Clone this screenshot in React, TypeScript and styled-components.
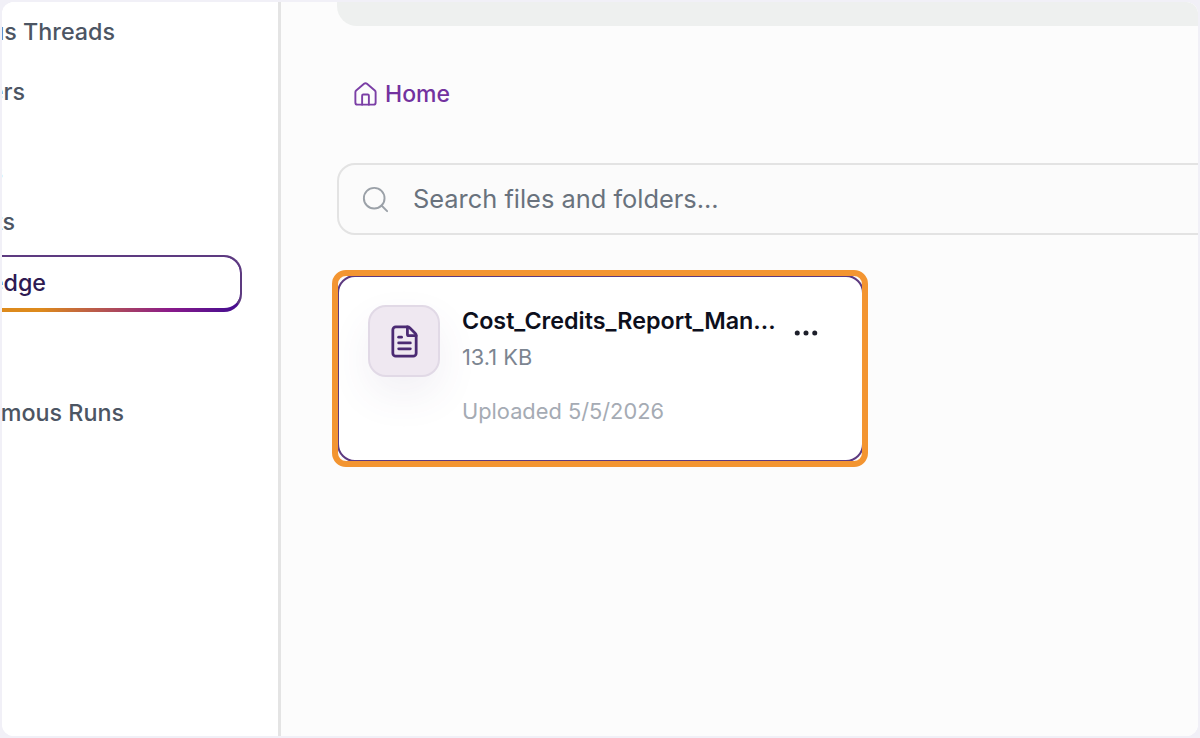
import styled, { createGlobalStyle } from "styled-components";
import { Ellipsis, FileText, House, Search } from "lucide-react";

const GlobalStyle = createGlobalStyle`
  html, body {
    margin: 0;
    height: 738px;
    background: #f1f0f7;
    overflow: hidden;
  }
  * {
    box-sizing: border-box;
  }
`;

const navItems = [
  { label: "Previous Threads", end: 115, top: 0, height: 60 },
  { label: "Members", end: 25, top: 0, height: 60 },
  { label: "Tools", end: 3, top: 20, height: 60, faint: true },
  { label: "Agents", end: 15, top: 0, height: 40 },
  { label: "Knowledge", end: 42, top: 13, height: 57, active: true },
  { label: "Autonomous Runs", end: 124, top: 71, height: 60 },
];

function App() {
  return (
    <>
      <GlobalStyle />
      <Frame>
        <Window>
          <Sidebar>
            {navItems.map((item) => (
              <NavRow
                key={item.label}
                $top={item.top}
                $height={item.height}
                $active={item.active}
              >
                <NavLabel $end={item.end} $active={item.active} $faint={item.faint}>
                  {item.label}
                </NavLabel>
              </NavRow>
            ))}
          </Sidebar>
          <Main>
            <TopBar />
            <Breadcrumb>
              <House size={27} strokeWidth={1.7} />
              <span>Home</span>
            </Breadcrumb>
            <SearchBox>
              <Search size={31} strokeWidth={1.5} />
              <SearchText>Search files and folders...</SearchText>
            </SearchBox>
            <Card>
              <IconTile>
                <FileText size={35} strokeWidth={1.9} />
              </IconTile>
              <CardBody>
                <FileName>Cost_Credits_Report_Man...</FileName>
                <FileSize>13.1 KB</FileSize>
                <FileDate>Uploaded 5/5/2026</FileDate>
              </CardBody>
              <MenuButton>
                <Ellipsis size={30} strokeWidth={2} />
              </MenuButton>
              <Highlight />
            </Card>
          </Main>
        </Window>
      </Frame>
    </>
  );
}

export default App;

const Frame = styled.div`
  height: 738px;
  padding: 2px;
`;

const Window = styled.div`
  display: flex;
  height: 100%;
  background: #fff;
  border-radius: 12px;
  overflow: hidden;
  font-family: Inter, "Liberation Sans", sans-serif;
`;

const Sidebar = styled.nav`
  flex: 0 0 279px;
  display: flex;
  flex-direction: column;
  background: #fff;
  border-right: 3px solid #e4e4e4;
  overflow: hidden;
`;

const NavRow = styled.div<{ $top: number; $height: number; $active?: boolean }>`
  display: flex;
  align-items: center;
  flex: 0 0 ${(p) => p.$height}px;
  margin-top: ${(p) => p.$top}px;
  margin-left: -2px;
  width: 242px;
  ${(p) =>
    p.$active &&
    `
    margin-left: -60px;
    width: 300px;
    padding-left: 60px;
    border-radius: 18px;
    border: 2px solid #5d3a80;
    border-bottom: 4px solid transparent;
    background:
      linear-gradient(#fff, #fff) padding-box,
      linear-gradient(90deg, #dd8a1c 33%, #8a1a8a 76%, #4a0e8f 96%) border-box;
    `}
`;

const NavLabel = styled.span<{ $end: number; $active?: boolean; $faint?: boolean }>`
  display: flex;
  justify-content: flex-end;
  flex: 0 0 ${(p) => p.$end}px;
  min-width: 0;
  padding-bottom: ${(p) => (p.$active ? 0 : 2)}px;
  white-space: nowrap;
  font-size: 23.3px;
  font-weight: 500;
  color: ${(p) => (p.$active ? "#2e1a52" : p.$faint ? "#7d9cc0" : "#4c5563")};
`;

const Main = styled.main`
  flex: 1;
  min-width: 0;
  padding-left: 56px;
  background: #fcfcfc;
  overflow: hidden;
`;

const TopBar = styled.div`
  height: 24px;
  margin-right: -20px;
  background: #eef0ef;
  border-bottom-left-radius: 20px;
`;

const Breadcrumb = styled.div`
  display: flex;
  align-items: center;
  gap: 6px;
  margin-top: 52px;
  padding-left: 15px;
  height: 32px;
  font-size: 23px;
  font-weight: 500;
  color: #73329f;

  svg {
    color: #7b3fa6;
  }
`;

const SearchBox = styled.div`
  display: flex;
  align-items: center;
  gap: 22px;
  height: 72px;
  margin-top: 53px;
  margin-right: -40px;
  padding-left: 21px;
  background: #fbfbfb;
  border: 2px solid #e3e3e3;
  border-radius: 18px;

  svg {
    color: #9ba1a8;
  }
`;

const SearchText = styled.span`
  padding-bottom: 2px;
  font-size: 25.4px;
  color: #69727d;
`;

const Card = styled.section`
  position: relative;
  display: flex;
  align-items: flex-start;
  width: 527px;
  height: 187px;
  margin-top: 40px;
  padding: 28px 0 0 29px;
  background: #fff;
  border: 2px solid #5d3a80;
  border-radius: 18px;
`;

const IconTile = styled.div`
  flex: 0 0 72px;
  height: 72px;
  display: flex;
  align-items: center;
  justify-content: center;
  background: #efe8f1;
  border: 2px solid #e1d9e6;
  border-radius: 18px;
  box-shadow: 0 18px 40px rgba(90, 60, 130, 0.08);

  svg {
    color: #4b2a73;
  }
`;

const CardBody = styled.div`
  flex: 0 0 auto;
  display: flex;
  flex-direction: column;
  margin-left: 22px;
  padding-top: 1px;
`;

const FileName = styled.div`
  font-size: 23.3px;
  line-height: 30px;
  font-weight: 600;
  color: #0d0f1c;
  white-space: nowrap;
`;

const FileSize = styled.div`
  margin-top: 7px;
  font-size: 21.8px;
  line-height: 28px;
  color: #7c8591;
`;

const FileDate = styled.div`
  margin-top: 26px;
  font-size: 21.8px;
  line-height: 28px;
  color: #a5abb4;
  white-space: nowrap;
`;

const MenuButton = styled.div`
  display: flex;
  margin: 13px 0 0 15px;
  color: #1d1f2a;
`;

const Highlight = styled.div`
  position: absolute;
  inset: -7px -6px -7px -7px;
  border: 6px solid #f39531;
  border-radius: 14px;
  pointer-events: none;
`;
